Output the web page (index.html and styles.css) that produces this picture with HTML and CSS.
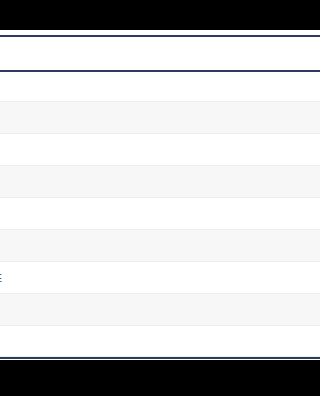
FILE: index.html
```html
<!DOCTYPE html>
<html>
<head>
<meta charset="utf-8">
<link rel="stylesheet" href="styles.css">
</head>
<body>
<div class="top"></div>
<div class="panel">
  <div class="table">
    <div class="head"></div>
    <div class="row"></div>
    <div class="row alt"></div>
    <div class="row"></div>
    <div class="row alt"></div>
    <div class="row"></div>
    <div class="row alt"></div>
    <div class="row"><div class="clip"><span class="txt">E</span></div></div>
    <div class="row alt"></div>
    <div class="row"></div>
  </div>
</div>
</body>
</html>
```

FILE: styles.css
```css
html, body {
  margin: 0;
  background: #000;
  font-family: "Liberation Sans", Arial, sans-serif;
}
.top {
  height: 30px;
}
.panel {
  background: #fff;
  padding-top: 5px;
  padding-bottom: 1px;
}
.table {
  border-top: 2px solid #2c3a5c;
  border-bottom: 2px solid #2c3a5c;
  display: flex;
  flex-direction: column;
}
.head {
  height: 33px;
  border-bottom: 2px solid #2c3a5c;
}
.row {
  height: 31px;
  border-bottom: 1px solid #efefef;
  background: #fff;
  display: flex;
  align-items: center;
}
.row:nth-child(2) {
  height: 29px;
}
.row:last-child {
  height: 30px;
}
.row.alt {
  background: #f7f7f7;
}
.clip {
  width: 2px;
  overflow: hidden;
  display: flex;
  justify-content: flex-end;
}
.txt {
  flex: none;
  font-size: 11px;
  color: #3a4868;
  line-height: 12px;
}
```
